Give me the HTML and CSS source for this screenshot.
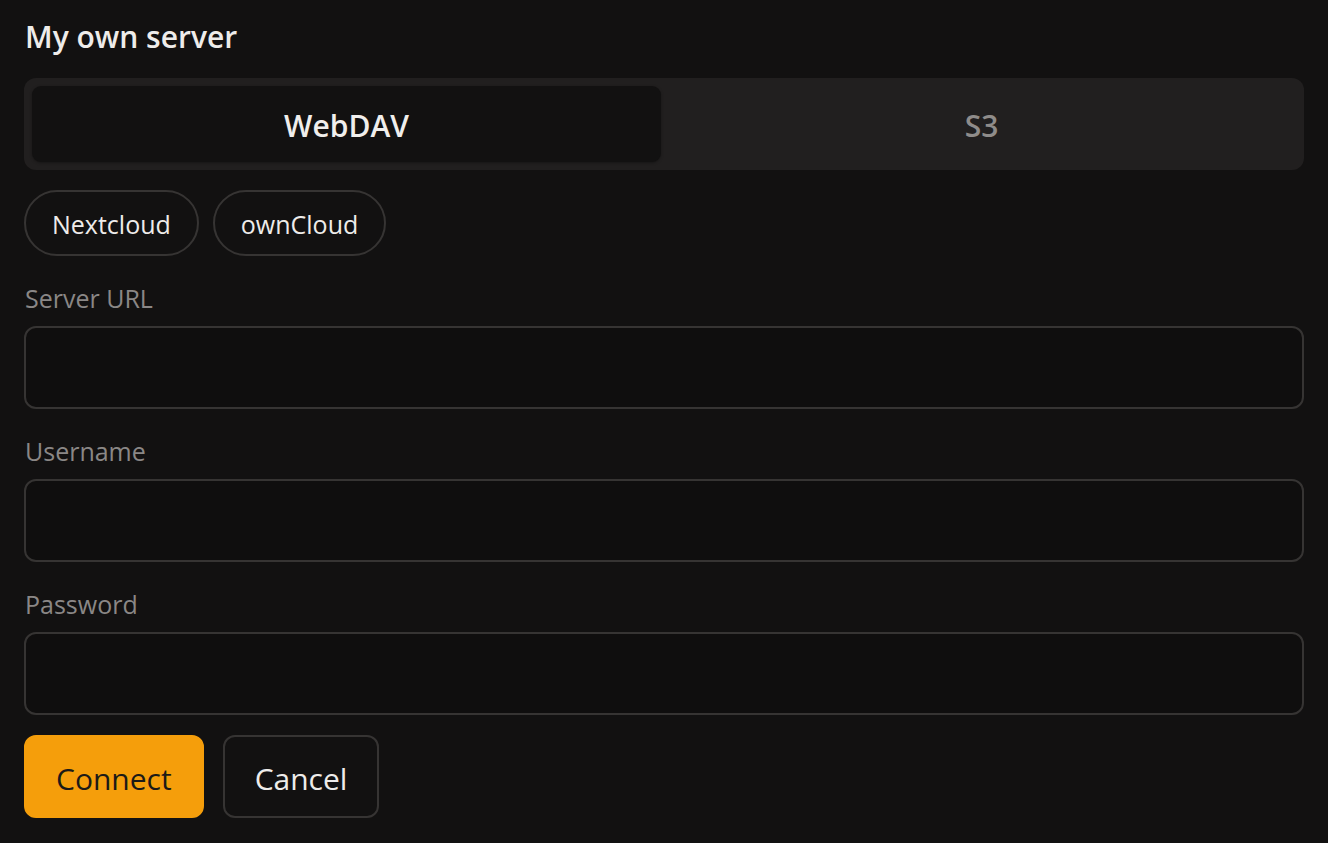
FILE: index.html
```html
<!DOCTYPE html>
<html lang="en">
<head>
<meta charset="utf-8">
<title>My own server</title>
<link rel="stylesheet" href="styles.css">
</head>
<body>
<main class="page">
  <h1 class="title">My own server</h1>
  <div class="segmented">
    <button class="seg seg-active">WebDAV</button>
    <button class="seg">S3</button>
  </div>
  <div class="chips">
    <button class="chip">Nextcloud</button>
    <button class="chip">ownCloud</button>
  </div>
  <div class="field">
    <label class="label">Server URL</label>
    <input class="input" type="text">
  </div>
  <div class="field">
    <label class="label">Username</label>
    <input class="input" type="text">
  </div>
  <div class="field">
    <label class="label">Password</label>
    <input class="input" type="password">
  </div>
  <div class="actions">
    <button class="btn btn-primary">Connect</button>
    <button class="btn btn-secondary">Cancel</button>
  </div>
</main>
</body>
</html>
```

FILE: styles.css
```css
html, body {
  margin: 0;
  padding: 0;
  background: #121111;
}
body {
  font-family: "Open Sans", "Noto Sans", sans-serif;
  color: #eeecea;
}
.page {
  padding: 19px 24px 24px;
  display: flex;
  flex-direction: column;
}
.title {
  margin: 0 0 23px;
  font-size: 30px;
  line-height: 36px;
  font-weight: 600;
  color: #eeecea;
  padding-left: 1px;
}
.segmented {
  display: flex;
  gap: 6px;
  padding: 8px;
  height: 92px;
  box-sizing: border-box;
  background: #211f1f;
  border-radius: 12px;
}
.seg {
  flex: 1;
  border: none;
  background: transparent;
  border-radius: 9px;
  font-family: inherit;
  font-size: 30px;
  font-weight: 600;
  color: #8f8c8a;
  display: flex;
  align-items: center;
  justify-content: center;
  padding: 3px 0 0;
}
.seg-active {
  background: #121111;
  color: #f0eeec;
  box-shadow: 0 1px 3px rgba(0,0,0,0.35);
}
.chips {
  display: flex;
  gap: 14px;
  margin-top: 20px;
}
.chip {
  height: 66px;
  padding: 2px 26px 0;
  border: 2px solid #363433;
  border-radius: 999px;
  background: transparent;
  font-family: inherit;
  font-size: 25px;
  color: #eeecea;
}
.field {
  display: flex;
  flex-direction: column;
  gap: 10px;
  margin-top: 24px;
}
.label {
  font-size: 25px;
  line-height: 36px;
  color: #8a8786;
  padding-left: 1px;
}
.input {
  height: 83px;
  box-sizing: border-box;
  border: 2px solid #363433;
  border-radius: 12px;
  background: #0f0e0e;
  color: #eeecea;
  font-family: inherit;
  font-size: 26px;
  padding: 0 20px;
  outline: none;
}
.actions {
  display: flex;
  gap: 19px;
  margin-top: 20px;
}
.btn {
  height: 83px;
  box-sizing: border-box;
  border-radius: 12px;
  font-family: inherit;
  font-size: 30px;
  padding: 4px 30px 0;
}
.btn-primary {
  background: #f59e0b;
  border: 2px solid #f59e0b;
  color: #1c1a17;
}
.btn-secondary {
  background: transparent;
  border: 2px solid #363433;
  color: #eeecea;
}
```
